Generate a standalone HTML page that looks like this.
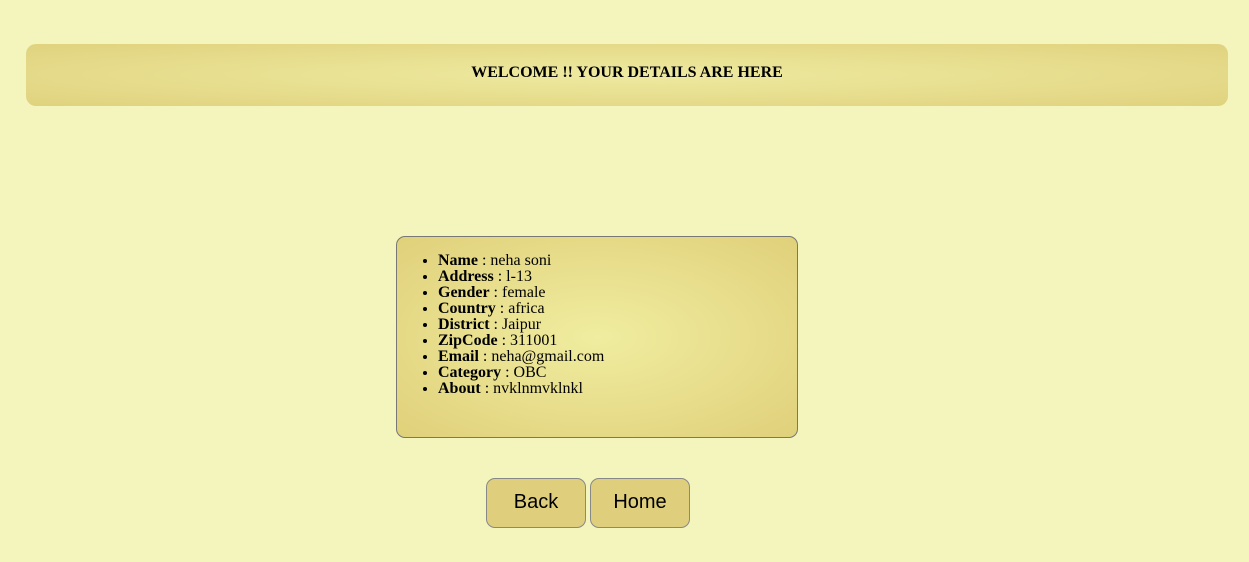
<!DOCTYPE html>
<html><head><style>
body{margin:0;background:#f4f4bd;font-family:"Liberation Serif",serif;width:1249px;height:562px;overflow:hidden;position:relative}
.hdr{position:absolute;left:26px;top:44px;width:1202px;height:62px;border-radius:10px;background:radial-gradient(ellipse at center,#eeeaa0 0%,#e0d27e 100%);text-align:center;line-height:57px;font-weight:bold;font-size:16px}
.box{position:absolute;left:396px;top:236px;width:400px;height:200px;border:1px solid #777;border-radius:9px;background:radial-gradient(ellipse at center,#f0eda0 0%,#e0d07a 100%);font-size:16px;line-height:16px}
.box ul{margin:16px 0 0 0;padding-left:41px}
.btn{position:absolute;top:478px;border:1px solid #888;border-radius:9px;background:#dfcf7d;font-family:"Liberation Sans",sans-serif;font-size:20px;text-align:center;line-height:46px;box-sizing:border-box;width:100px;height:50px}
</style></head><body>
<div class="hdr">WELCOME !! YOUR DETAILS ARE HERE</div>
<div class="box"><ul>
<li><b>Name</b> : neha soni</li>
<li><b>Address</b> : l-13</li>
<li><b>Gender</b> : female</li>
<li><b>Country</b> : africa</li>
<li><b>District</b> : Jaipur</li>
<li><b>ZipCode</b> : 311001</li>
<li><b>Email</b> : neha@gmail.com</li>
<li><b>Category</b> : OBC</li>
<li><b>About</b> : nvklnmvklnkl</li>
</ul></div>
<div class="btn" style="left:486px">Back</div>
<div class="btn" style="left:590px">Home</div>
</body></html>
